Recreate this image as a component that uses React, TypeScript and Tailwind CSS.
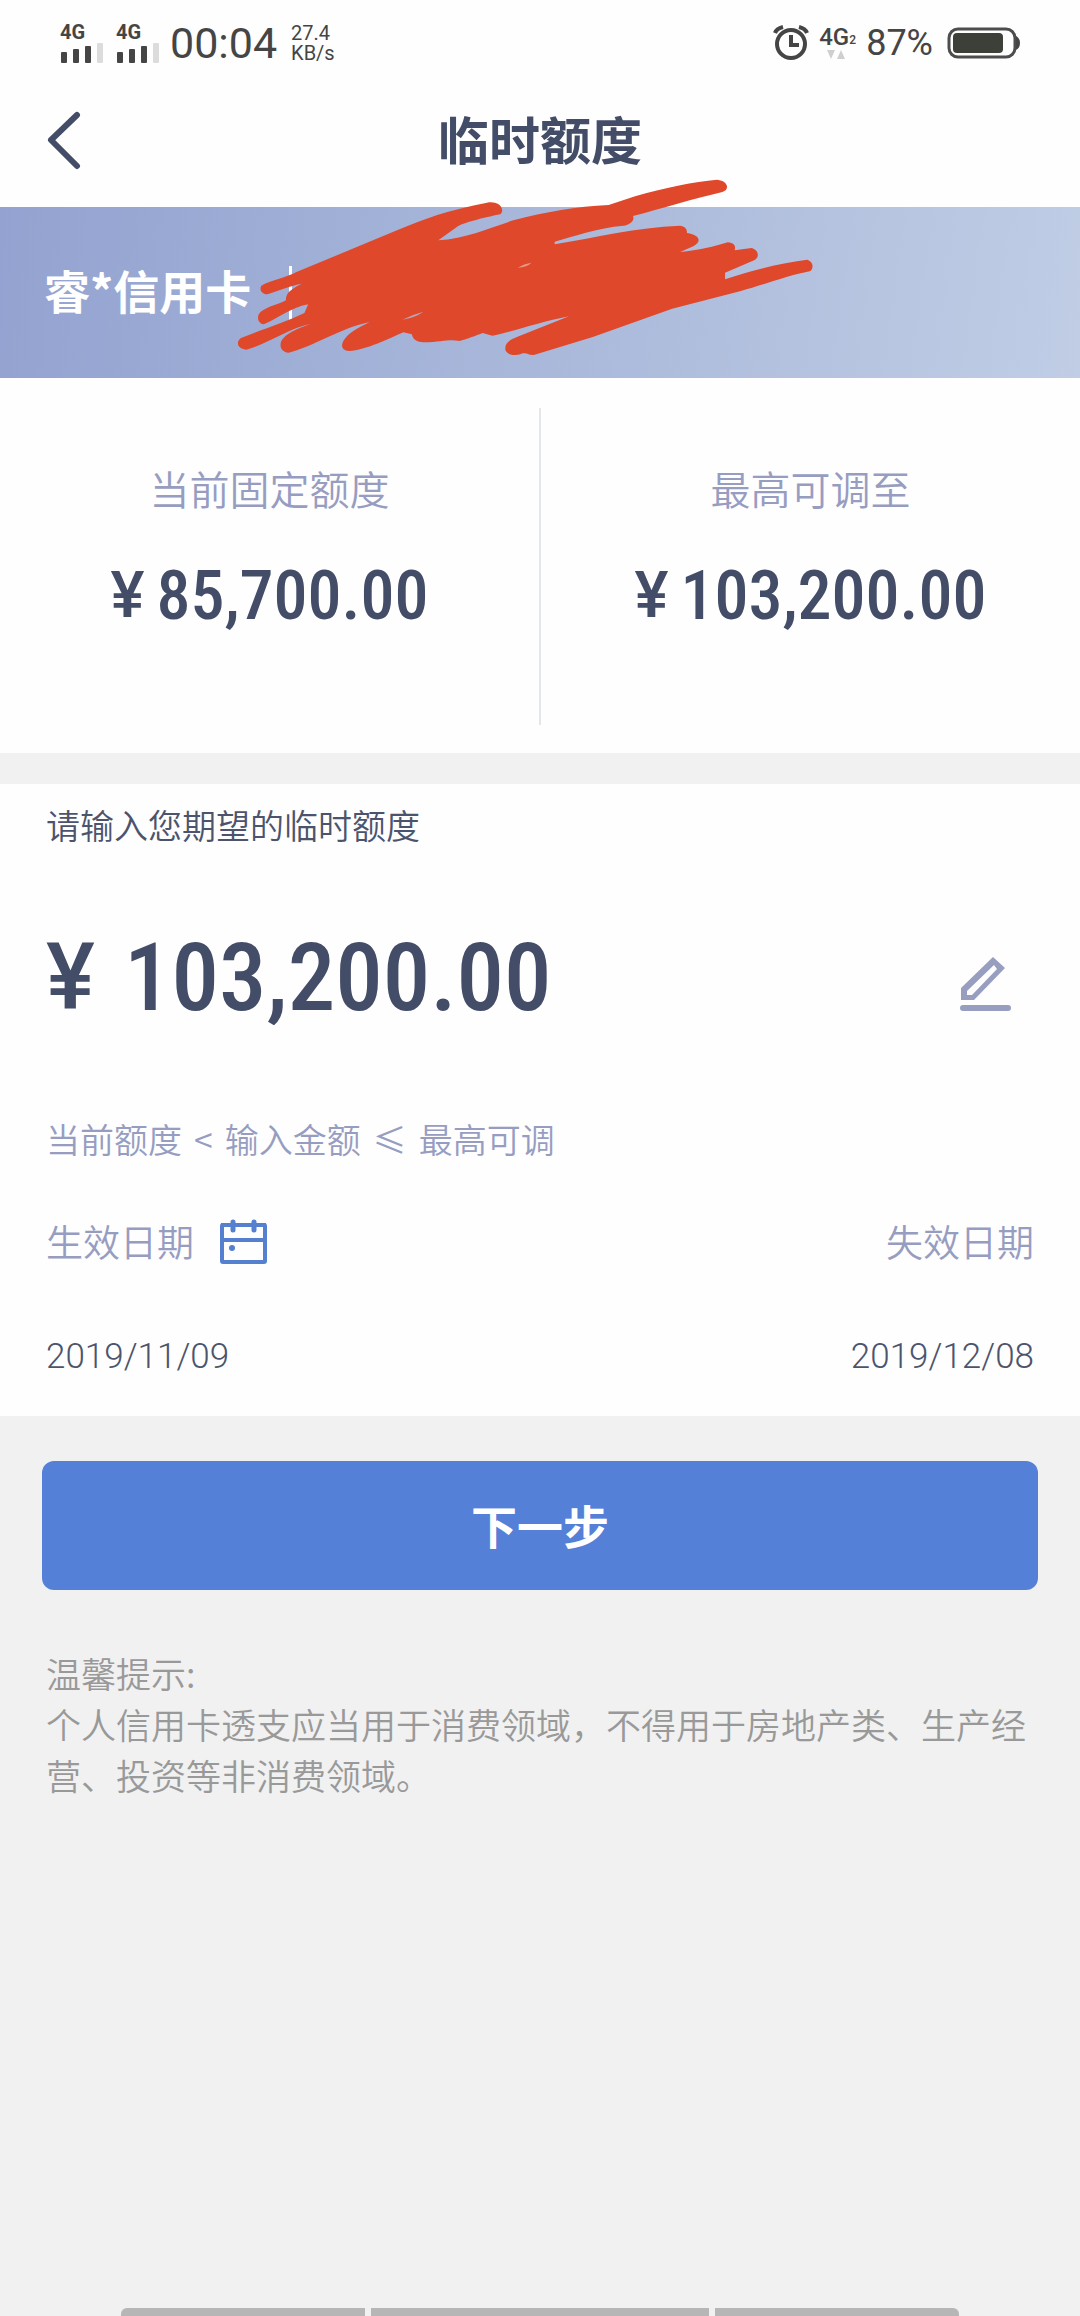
import { useState } from "react";

const NUM = 'font-["Roboto_Condensed",Roboto,sans-serif] font-medium';

function SignalBars() {
  return (
    <div className="flex w-[44px] flex-col gap-[3px]">
      <span className="font-[Roboto,sans-serif] text-[20px] leading-[16px] font-bold">4G</span>
      <svg width="44" height="20" viewBox="0 0 44 20" aria-hidden="true">
        <rect x="1" y="9" width="6" height="11" rx="1" fill="#454545" />
        <rect x="13" y="6" width="6" height="14" rx="1" fill="#454545" />
        <rect x="25" y="3" width="6" height="17" rx="1" fill="#454545" />
        <rect x="37" y="0" width="6" height="20" rx="1" fill="#dcdcdc" />
      </svg>
    </div>
  );
}

function StatusBar() {
  return (
    <div className="flex h-[72px] items-center justify-between pt-[14px] pr-[59px] pl-[60px] text-[#454545]">
      <div className="flex items-center">
        <div className="flex gap-[12px]">
          <SignalBars />
          <SignalBars />
        </div>
        <span className="ml-[10px] font-[Roboto,sans-serif] text-[43px] leading-[48px]">00:04</span>
        <div className="ml-[14px] flex flex-col font-[Roboto,sans-serif] text-[20px] leading-[20px]">
          <span>27.4</span>
          <span>KB/s</span>
        </div>
      </div>
      <div className="flex items-center">
        <svg width="36" height="36" viewBox="0 0 36 36" fill="none" stroke="#454545" aria-hidden="true">
          <circle cx="18" cy="19" r="14" strokeWidth="4" />
          <path d="M18 10v10h8" strokeWidth="4" />
          <path d="M2 8c1-3 4-5 8-6M34 8c-1-3-4-5-8-6" strokeWidth="4" />
        </svg>
        <div className="ml-[10px] flex w-[37px] flex-col">
          <span className="flex items-end font-[Roboto,sans-serif] text-[24px] leading-[20px] font-medium">
            4G<span className="text-[12px] leading-[14px]">2</span>
          </span>
          <svg className="mt-[3px] ml-[8px]" width="18" height="10" viewBox="0 0 18 10" fill="#cfcfcf" aria-hidden="true">
            <path d="M0 0h8l-4 9zM10 9h8l-4-9z" />
          </svg>
        </div>
        <span className="ml-[10px] font-[Roboto,sans-serif] text-[36px] leading-[40px]">87%</span>
        <svg className="ml-[14px]" width="74" height="32" viewBox="0 0 74 32" aria-hidden="true">
          <rect x="2" y="2" width="66" height="28" rx="9" fill="none" stroke="#4d4d4d" strokeWidth="3" />
          <path d="M69 9c2 1 4 3 4 7s-2 6-4 7z" fill="#454545" />
          <rect x="6" y="6" width="50" height="20" rx="4" fill="#3d3f39" />
        </svg>
      </div>
    </div>
  );
}

function Scribble() {
  return (
    <svg
      className="absolute top-[-30px] left-[233px]"
      width="582"
      height="180"
      viewBox="440 20 1100 540"
      preserveAspectRatio="none"
      aria-hidden="true"
    >
      <path
        fill="#e0482b"
        d="M495 345C510 330 540 322 560 305L750 180C800 145 850 118 920 97C945 90 955 120 945 132C920 140 880 155 865 168L828 210C880 205 930 170 970 150C1030 125 1090 108 1150 104L1200 78C1260 50 1310 35 1355 28C1378 32 1378 60 1365 65C1310 85 1250 115 1196 137C1200 150 1190 165 1178 166C1130 172 1080 200 1048 214L1048 222C1130 200 1200 172 1285 166C1298 170 1298 180 1298 188C1325 195 1325 215 1310 228L1285 245C1320 240 1350 228 1375 216C1390 218 1390 230 1388 240L1420 233C1435 240 1435 262 1425 270L1370 307L1370 327C1420 300 1470 280 1525 268C1540 275 1536 300 1530 303C1490 315 1440 345 1400 362L1270 415L1120 500L1010 553C1000 558 998 545 985 550C968 560 958 550 955 540C953 520 960 510 980 498L1075 438C1020 455 960 488 930 496L912 488C900 495 880 508 868 512C850 505 835 515 800 516C785 516 780 505 778 492L762 486C735 505 690 540 660 542C642 540 645 520 650 508C660 485 680 470 698 455C640 475 590 530 545 547C530 545 527 525 532 510C540 490 560 475 587 461C550 470 500 525 465 538C448 535 445 515 455 503C490 480 540 455 575 428L582 402C550 410 520 450 498 462C485 458 485 435 492 425C505 408 530 400 540 390C540 370 545 360 570 340C550 345 525 362 505 372C490 370 490 350 495 345Z"
      />
      <path fill="#b9a3b4" d="M760 448Q780 432 800 424Q784 442 760 448Z" />
      <path fill="#e59a86" d="M978 292Q990 280 1004 277Q996 290 978 292Z" />
    </svg>
  );
}

function Stat({ label, value }: { label: string; value: string }) {
  return (
    <div className="flex flex-col items-center pt-[84px]">
      <span className="text-[40px] leading-[52px] font-[350] text-[#979dc1]">{label}</span>
      <span className="mt-[46px] flex gap-[12px] text-[68px] leading-[72px] text-[#434d68]">
        <span className="font-[Roboto,sans-serif] text-[64px] font-medium">¥</span>
        <span className={NUM}>{value}</span>
      </span>
    </div>
  );
}

export default function App() {
  const [amount, setAmount] = useState("103,200.00");
  return (
    <div className='flex min-h-screen flex-col bg-[#f1f1f1] font-["Noto_Sans_CJK_SC",sans-serif]'>
      <header className="bg-[#fefefe]">
        <StatusBar />
        <div className="grid h-[135px] grid-cols-[1fr_auto_1fr] items-center px-[46px]">
          <button type="button" aria-label="返回" className="flex h-[60px] w-[40px] items-center">
            <svg width="36" height="60" viewBox="0 0 36 60" fill="none" stroke="#434d68" strokeWidth="6" strokeLinecap="round" strokeLinejoin="round" aria-hidden="true">
              <path d="M31 5L5 30l26 26" />
            </svg>
          </button>
          <h1 className="pb-[4px] text-[51px] leading-[60px] font-bold text-[#434d68]">临时额度</h1>
        </div>
      </header>

      <section className="relative flex h-[171px] items-center bg-[linear-gradient(98deg,#93a2d0_0%,#a9b8da_50%,#c0cde5_100%)] pl-[44px] text-white">
        <span className="pb-[8px] text-[46px] leading-[54px] font-bold">睿*信用卡</span>
        <span className="ml-[38px] h-[54px] w-[3px] bg-white" />
        <Scribble />
      </section>

      <section className="grid h-[375px] grid-cols-[1fr_2px_1fr] bg-[#fefefe]">
        <Stat label="当前固定额度" value="85,700.00" />
        <span className="mt-[30px] mb-[28px] bg-[#e3e6ea]" />
        <Stat label="最高可调至" value="103,200.00" />
      </section>

      <section className="mt-[31px] bg-[#fefefe] px-[46px] pt-[20px] pb-[38px]">
        <label htmlFor="amount" className="block text-[34px] leading-[42px] font-[350] text-[#4c546d]">
          请输入您期望的临时额度
        </label>
        <div className="mt-[72px] flex h-[120px] items-center text-[#434d68]">
          <span className="w-[54px] font-[Roboto,sans-serif] text-[92px] leading-[120px] font-medium">¥</span>
          <input
            id="amount"
            type="text"
            inputMode="decimal"
            value={amount}
            onChange={(e) => setAmount(e.target.value)}
            className={`ml-[24px] h-[120px] w-0 flex-1 bg-transparent text-[95px] leading-[120px] outline-none ${NUM}`}
          />
          <button type="button" aria-label="编辑额度" className="mr-[22px]">
            <svg className="mt-[12px]" width="52" height="56" viewBox="0 0 52 56" fill="#979ec0" aria-hidden="true">
              <path fillRule="evenodd" d="M33 1L45 12L14 44H1V32ZM34 9L7 35V39H12L37 13Z" />
              <rect x="0" y="49" width="51" height="6" rx="3" />
            </svg>
          </button>
        </div>
        <p className="mt-[80px] flex gap-[12px] text-[34px] leading-[42px] font-[350] text-[#979dc1]">
          <span>当前额度</span>
          <span>&lt;</span>
          <span>输入金额</span>
          <span>≤</span>
          <span>最高可调</span>
        </p>
        <div className="mt-[56px] flex h-[50px] items-center justify-between text-[37px] leading-[50px] font-[350] text-[#979dc1]">
          <div className="flex items-center gap-[24px]">
            <span>生效日期</span>
            <button type="button" aria-label="选择生效日期">
              <svg width="50" height="50" viewBox="0 0 50 50" fill="none" stroke="#5580cf" aria-hidden="true">
                <rect x="4" y="9" width="43" height="37" rx="1" strokeWidth="4" />
                <path d="M3 9H48M4 24H47" strokeWidth="4" />
                <path d="M15 6V14M36 6V14" strokeWidth="5" strokeLinecap="round" />
                <circle cx="14" cy="32" r="3" fill="#5580cf" stroke="none" />
              </svg>
            </button>
          </div>
          <span>失效日期</span>
        </div>
        <div className="mt-[70px] flex justify-between font-[Roboto,sans-serif] text-[35px] leading-[42px] font-[350] text-[#4c546d]">
          <time dateTime="2019-11-09">2019/11/09</time>
          <time dateTime="2019-12-08">2019/12/08</time>
        </div>
      </section>

      <main className="px-[42px] pt-[45px]">
        <button type="button" className="h-[129px] w-full rounded-[12px] bg-[#5480d8] pb-[4px] text-[46px] leading-[60px] font-bold text-white">
          下一步
        </button>
        <div className="mt-[57px] px-[4px] text-[35px] leading-[51px] font-[350] text-[#999999]">
          <p>温馨提示:</p>
          <p>个人信用卡透支应当用于消费领域，不得用于房地产类、生产经营、投资等非消费领域。</p>
        </div>
      </main>

      <div className="mt-auto grid grid-cols-[243fr_338fr_243fr] gap-[6px] px-[121px]">
        <span className="h-[8px] rounded-tl-[6px] bg-[#b6b6b6]" />
        <span className="h-[8px] bg-[#b6b6b6]" />
        <span className="h-[8px] rounded-tr-[6px] bg-[#b6b6b6]" />
      </div>
    </div>
  );
}
